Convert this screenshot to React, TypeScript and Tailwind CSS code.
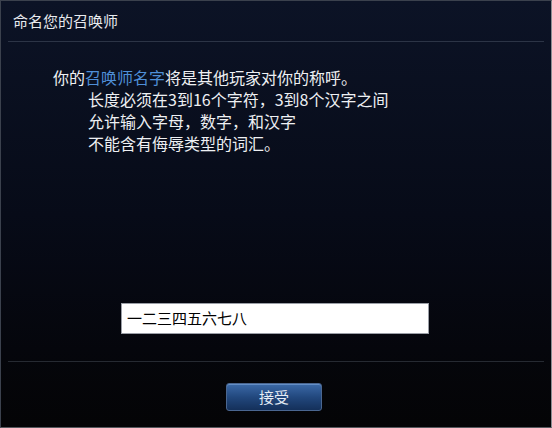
const font = { fontFamily: '"Noto Sans CJK SC", "Liberation Sans", sans-serif' };

export default function App() {
  return (
    <div
      className="w-[552px] h-[428px] bg-gradient-to-b from-[#0c1326] via-[#070b18] to-[#040406] border border-[#3b414d] border-r-[#8a8d92] border-b-[#55585e] flex flex-col text-white"
      style={font}
    >
      <div className="h-[40px] px-3 flex items-center text-[15px] text-[#e8eaee]">命名您的召唤师</div>
      <div className="mx-[7px] h-px bg-[#2c3446]" />

      <div className="pl-[52px] pt-[24px] text-[16px] leading-[22px] text-[#eef0f3]">
        <div>
          你的<span className="text-[#4f8fd8]">召唤师名字</span>将是其他玩家对你的称呼。
        </div>
        <div className="pl-[35px]">
          <div>长度必须在3到16个字符，3到8个汉字之间</div>
          <div>允许输入字母，数字，和汉字</div>
          <div>不能含有侮辱类型的词汇。</div>
        </div>
      </div>

      <div className="flex-1" />

      <div className="pl-[120px] pb-[27px]">
        <div className="w-[308px] h-[31px] bg-white border border-[#9a9ea6] flex items-center px-[5px] text-[15px] text-black">
          一二三四五六七八
        </div>
      </div>

      <div className="mx-[7px] h-px bg-[#262a32]" />

      <div className="flex justify-center pt-[21px] pb-[16px] pr-[4px]">
        <button className="w-[96px] h-[28px] rounded-[3px] border border-[#4a6690] bg-gradient-to-b from-[#3c6aa8] via-[#22487e] to-[#14305a] text-[15px] text-[#e6ecf5] flex items-center justify-center shadow-[inset_0_1px_0_rgba(140,180,230,0.5)]">
          接受
        </button>
      </div>
    </div>
  );
}
